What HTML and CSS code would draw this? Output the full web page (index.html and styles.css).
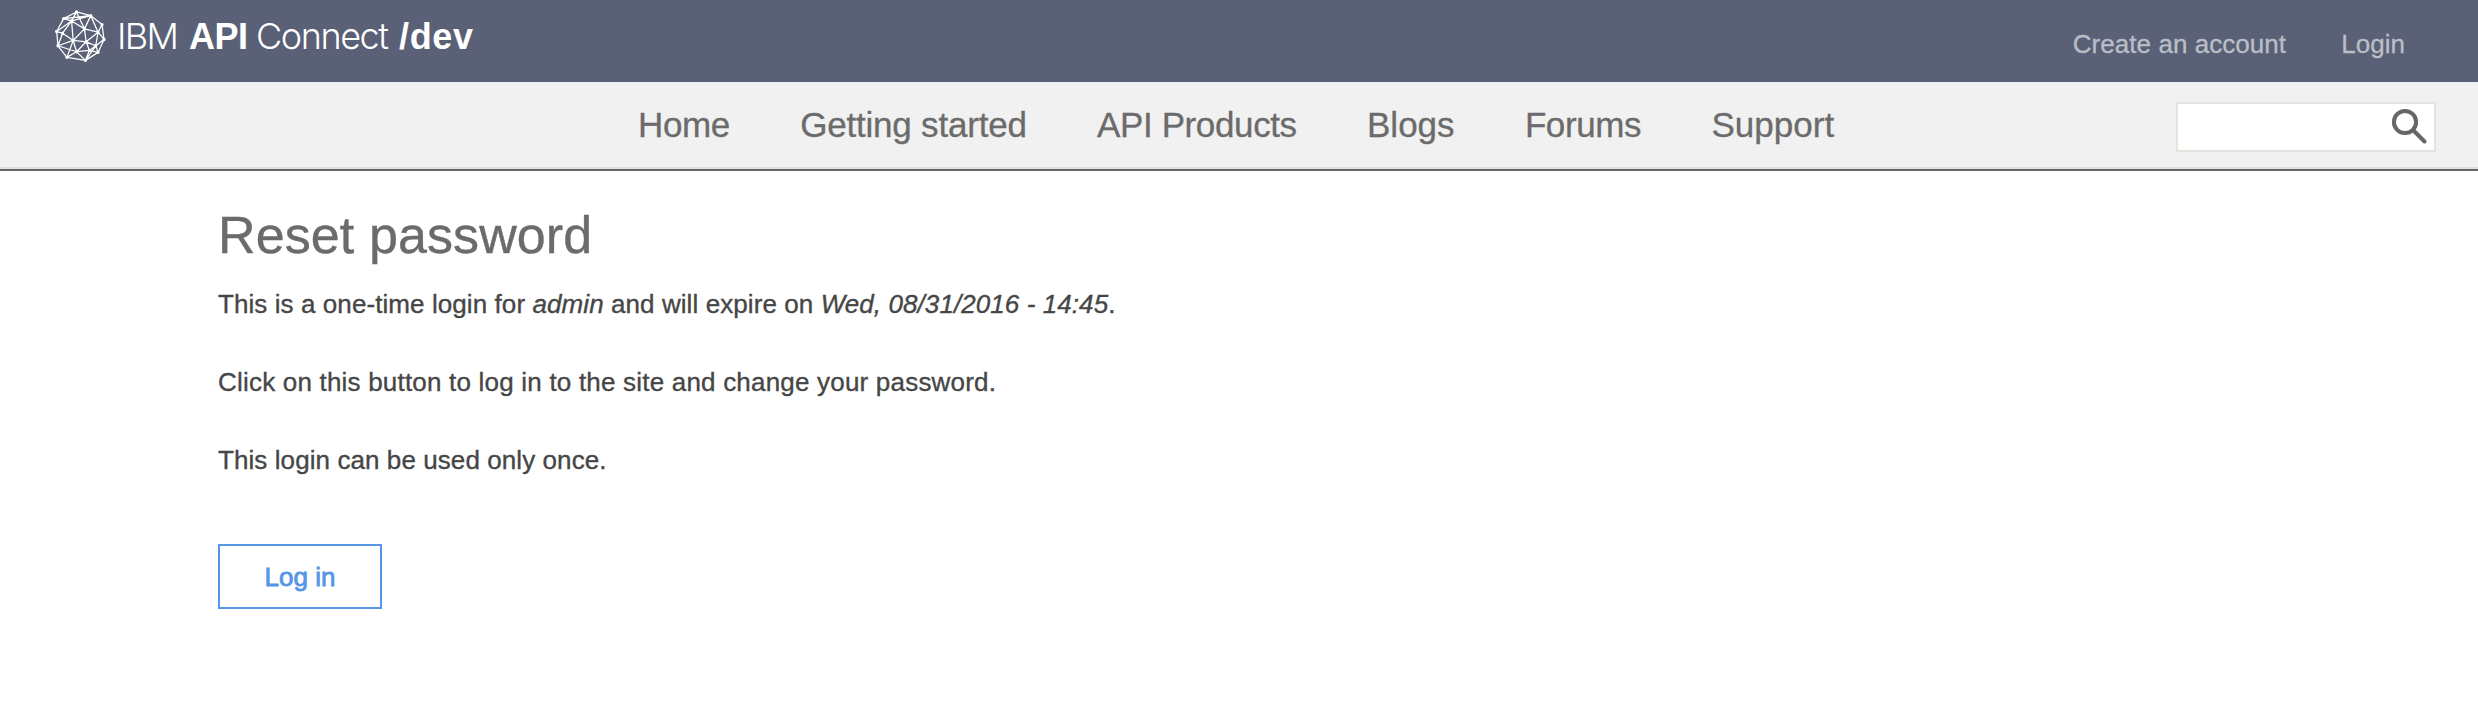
FILE: index.html
```html
<!DOCTYPE html>
<html lang="en">
<head>
<meta charset="utf-8">
<title>Reset password</title>
<link rel="stylesheet" href="styles.css">
</head>
<body>
<header class="top">
  <a class="brand">
    <svg class="globe" viewBox="42 26 160 160" aria-hidden="true">
      <path class="wire" d="M110 35L153 46L187 73L193 118L175 157L137 181L81 172L54 137L50 94L71 55ZM110 35L95 62L71 55M71 55L153 46L95 62L50 94M95 62L134 86L110 35M153 46L134 86M153 46L175 96L187 73M134 86L175 96L193 118M95 62L68 99L50 94M95 62L100 121L134 86L139 125L175 96M68 99L54 137L100 121L68 99M100 121L139 125L110 155L100 121L81 172L110 155L54 137M110 155L137 181L149 151L110 155M139 125L149 151L168 137L139 125M168 137L193 118L149 151L175 157L168 137L175 96M137 181L168 137"/>
      <path class="nodes" d="M110 35h0M153 46h0M187 73h0M193 118h0M175 157h0M137 181h0M81 172h0M54 137h0M50 94h0M71 55h0M95 62h0M134 86h0M175 96h0M100 121h0M139 125h0M168 137h0M149 151h0M110 155h0M68 99h0"/>
    </svg>
    <svg class="wordmark" viewBox="0 0 390 82">
      <text x="7" y="49" textLength="62">IBM</text>
      <text class="strong" x="79" y="49" textLength="59">API</text>
      <text x="146" y="49" textLength="133">Connect</text>
      <text class="strong" x="289" y="49" textLength="74">/dev</text>
    </svg>
  </a>
  <nav class="account"><a>Create an account</a><a>Login</a></nav>
</header>
<div class="menu-bar">
  <nav class="menu"><a class="tight">Home</a><a>Getting started</a><a class="tight">API Products</a><a class="loose">Blogs</a><a class="tight">Forums</a><a class="loose">Support</a></nav>
  <div class="search">
    <svg class="lens" viewBox="0 0 40 40"><circle cx="15" cy="15" r="11.1"/><path d="M24 24L34.5 34.5"/></svg>
  </div>
</div>
<main class="content">
  <h1>Reset password</h1>
  <p class="first">This is a one-time login for <em>admin</em> and will expire on <em>Wed, 08/31/2016 - 14:45</em>.</p>
  <p class="second">Click on this button to log in to the site and change your password.</p>
  <p>This login can be used only once.</p>
  <button class="login">Log in</button>
</main>
</body>
</html>
```
FILE: styles.css
```css
* { box-sizing: border-box; }
body { margin: 0; background: #fff; color: #464646; font-family: "Liberation Sans", Arial, sans-serif; font-size: 26px; }
.top { display: flex; justify-content: space-between; height: 82px; background: #5a6076; }
.brand { display: flex; padding-left: 54px; }
.globe { width: 53px; height: 53px; margin-top: 9px; }
.wire { fill: none; stroke: #fff; stroke-width: 3.8; stroke-linejoin: round; }
.nodes { fill: none; stroke: #fff; stroke-width: 10; stroke-linecap: round; }
.wordmark { width: 390px; height: 82px; margin-left: 3px; font-family: Inter, "Liberation Sans", sans-serif; font-size: 36px; font-weight: 300; fill: #fff; }
.strong { font-weight: 700; font-family: "Liberation Sans", sans-serif; }
.account { display: flex; gap: 55px; padding: 29px 73px 0 0; line-height: 30px; letter-spacing: .05px; color: #b8bfc7; -webkit-text-stroke: .3px #b8bfc7; }
.menu-bar { display: flex; height: 89px; padding-left: 638px; background: #f1f1f1; border-bottom: 2px solid #666; box-shadow: inset 0 -2px #dfdfe6; }
.menu { display: flex; gap: 70.3px; padding-top: 23px; font-size: 35px; line-height: 40px; color: #6b6b6b; -webkit-text-stroke: .3px #6b6b6b; letter-spacing: -.2px; white-space: nowrap; }
.menu .tight { letter-spacing: -.38px; }
.menu .loose { letter-spacing: 0; }
.search { display: flex; justify-content: flex-end; width: 260px; height: 50px; margin: 20px 42px 0 auto; border: 2px solid #e3e4dd; background: #fff; }
.lens { width: 40px; height: 40px; margin: 3px 4px 0 0; fill: none; stroke: #666; stroke-width: 4; stroke-linecap: round; }
.content { padding: 32px 0 0 218px; }
h1 { margin: 0; font-size: 52px; line-height: 64px; font-weight: 400; letter-spacing: .1px; color: #6b6b6b; -webkit-text-stroke: .4px #6b6b6b; }
p { margin: 0; height: 78px; line-height: 30px; letter-spacing: .08px; -webkit-text-stroke: .35px #464646; white-space: nowrap; }
p.first { margin-top: 22px; }
p.second { letter-spacing: .2px; }
.login { display: block; width: 164px; height: 65px; margin-top: 21px; padding: 2px 0 0; border: 2px solid #5596e6; background: #fff; color: #5596e6; font: 26px "Liberation Sans", sans-serif; -webkit-text-stroke: .8px #5596e6; }
```
